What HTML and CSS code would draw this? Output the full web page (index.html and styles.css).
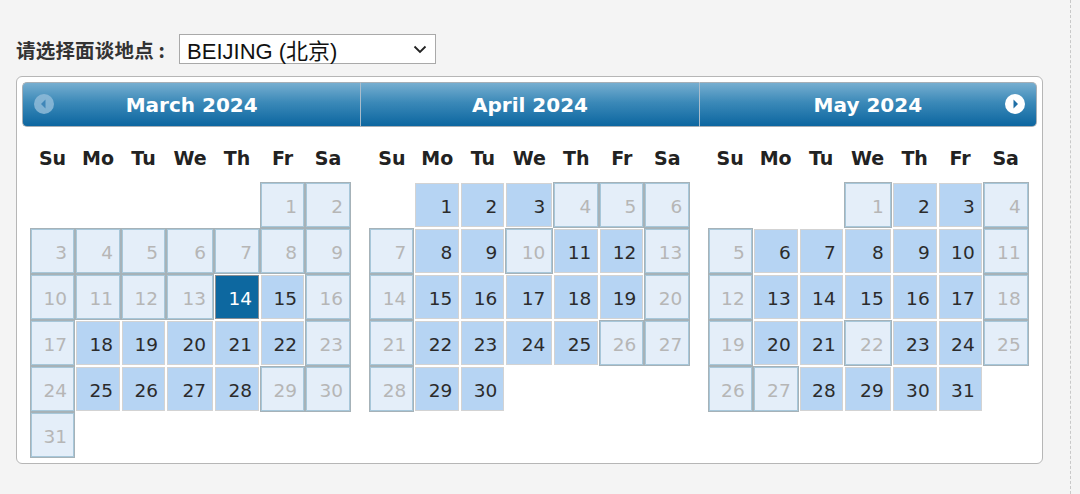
FILE: index.html
```html
<!DOCTYPE html>
<html lang="zh">
<head>
<meta charset="utf-8">
<title>面谈地点</title>
<link rel="stylesheet" href="styles.css">
</head>
<body>
<div class="page">
  <div class="picker-row">
    <label class="label">请选择面谈地点 :</label>
    <div class="select">
      <span class="select-text">BEIJING (北京)</span>
      <svg class="chev" width="14" height="9" viewBox="0 0 14 9"><path d="M1.5 1.5 L7 7 L12.5 1.5" fill="none" stroke="#222" stroke-width="1.8"/></svg>
    </div>
  </div>

  <div class="box">
    <div class="months">
      <div class="month first">
        <div class="mhead">
          <span class="nav prev"><svg width="20" height="20" viewBox="0 0 20 20"><circle cx="10" cy="10" r="10" fill="#8fbbd8" fill-opacity="0.85"/><path d="M11.5 5.5 L7 10 L11.5 14.5 Z" fill="#3f86b8"/></svg></span>
          <span class="mtitle">March 2024</span>
        </div>
        <table class="cal">
          <colgroup><col class="c1"><col class="c2"><col class="c3"><col class="c4"><col class="c5"><col class="c6"><col class="c7"></colgroup>
          <thead><tr><th>Su</th><th>Mo</th><th>Tu</th><th>We</th><th>Th</th><th>Fr</th><th>Sa</th></tr></thead>
          <tbody>
            <tr><td></td><td></td><td></td><td></td><td></td><td class="off"><span>1</span></td><td class="off"><span>2</span></td></tr>
            <tr><td class="off"><span>3</span></td><td class="off"><span>4</span></td><td class="off"><span>5</span></td><td class="off"><span>6</span></td><td class="off"><span>7</span></td><td class="off"><span>8</span></td><td class="off"><span>9</span></td></tr>
            <tr><td class="off"><span>10</span></td><td class="off"><span>11</span></td><td class="off"><span>12</span></td><td class="off"><span>13</span></td><td class="on sel"><span>14</span></td><td class="on"><span>15</span></td><td class="off"><span>16</span></td></tr>
            <tr><td class="off"><span>17</span></td><td class="on"><span>18</span></td><td class="on"><span>19</span></td><td class="on"><span>20</span></td><td class="on"><span>21</span></td><td class="on"><span>22</span></td><td class="off"><span>23</span></td></tr>
            <tr><td class="off"><span>24</span></td><td class="on"><span>25</span></td><td class="on"><span>26</span></td><td class="on"><span>27</span></td><td class="on"><span>28</span></td><td class="off"><span>29</span></td><td class="off"><span>30</span></td></tr>
            <tr><td class="off"><span>31</span></td><td></td><td></td><td></td><td></td><td></td><td></td></tr>
          </tbody>
        </table>
      </div>

      <div class="month">
        <div class="mhead">
          <span class="mtitle">April 2024</span>
        </div>
        <table class="cal">
          <colgroup><col class="c1"><col class="c2"><col class="c3"><col class="c4"><col class="c5"><col class="c6"><col class="c7"></colgroup>
          <thead><tr><th>Su</th><th>Mo</th><th>Tu</th><th>We</th><th>Th</th><th>Fr</th><th>Sa</th></tr></thead>
          <tbody>
            <tr><td></td><td class="on"><span>1</span></td><td class="on"><span>2</span></td><td class="on"><span>3</span></td><td class="off"><span>4</span></td><td class="off"><span>5</span></td><td class="off"><span>6</span></td></tr>
            <tr><td class="off"><span>7</span></td><td class="on"><span>8</span></td><td class="on"><span>9</span></td><td class="off"><span>10</span></td><td class="on"><span>11</span></td><td class="on"><span>12</span></td><td class="off"><span>13</span></td></tr>
            <tr><td class="off"><span>14</span></td><td class="on"><span>15</span></td><td class="on"><span>16</span></td><td class="on"><span>17</span></td><td class="on"><span>18</span></td><td class="on"><span>19</span></td><td class="off"><span>20</span></td></tr>
            <tr><td class="off"><span>21</span></td><td class="on"><span>22</span></td><td class="on"><span>23</span></td><td class="on"><span>24</span></td><td class="on"><span>25</span></td><td class="off"><span>26</span></td><td class="off"><span>27</span></td></tr>
            <tr><td class="off"><span>28</span></td><td class="on"><span>29</span></td><td class="on"><span>30</span></td><td></td><td></td><td></td><td></td></tr>
          </tbody>
        </table>
      </div>

      <div class="month last">
        <div class="mhead">
          <span class="mtitle">May 2024</span>
          <span class="nav next"><svg width="20" height="20" viewBox="0 0 20 20"><circle cx="10" cy="10" r="10" fill="#ffffff"/><path d="M8.5 5.5 L13 10 L8.5 14.5 Z" fill="#1f6fa6"/></svg></span>
        </div>
        <table class="cal">
          <colgroup><col class="c1"><col class="c2"><col class="c3"><col class="c4"><col class="c5"><col class="c6"><col class="c7"></colgroup>
          <thead><tr><th>Su</th><th>Mo</th><th>Tu</th><th>We</th><th>Th</th><th>Fr</th><th>Sa</th></tr></thead>
          <tbody>
            <tr><td></td><td></td><td></td><td class="off"><span>1</span></td><td class="on"><span>2</span></td><td class="on"><span>3</span></td><td class="off"><span>4</span></td></tr>
            <tr><td class="off"><span>5</span></td><td class="on"><span>6</span></td><td class="on"><span>7</span></td><td class="on"><span>8</span></td><td class="on"><span>9</span></td><td class="on"><span>10</span></td><td class="off"><span>11</span></td></tr>
            <tr><td class="off"><span>12</span></td><td class="on"><span>13</span></td><td class="on"><span>14</span></td><td class="on"><span>15</span></td><td class="on"><span>16</span></td><td class="on"><span>17</span></td><td class="off"><span>18</span></td></tr>
            <tr><td class="off"><span>19</span></td><td class="on"><span>20</span></td><td class="on"><span>21</span></td><td class="off"><span>22</span></td><td class="on"><span>23</span></td><td class="on"><span>24</span></td><td class="off"><span>25</span></td></tr>
            <tr><td class="off"><span>26</span></td><td class="off"><span>27</span></td><td class="on"><span>28</span></td><td class="on"><span>29</span></td><td class="on"><span>30</span></td><td class="on"><span>31</span></td><td></td></tr>
          </tbody>
        </table>
      </div>
    </div>
  </div>
</div>
</body>
</html>
```

FILE: styles.css
```css
html, body {
  margin: 0;
  padding: 0;
  background: #f4f4f4;
}

.page {
  width: 1071px;
  height: 494px;
  box-sizing: border-box;
  border-right: 1px dashed #c9c9c9;
  padding: 34px 0 0 16px;
}

.picker-row {
  display: flex;
  align-items: center;
  gap: 14px;
  height: 30px;
}

.label {
  font-family: "Noto Sans CJK SC", "Noto Sans", sans-serif;
  font-weight: bold;
  font-size: 19.5px;
  color: #333;
  letter-spacing: 0.2px;
}

.select {
  width: 257px;
  height: 30px;
  box-sizing: border-box;
  border: 1px solid #a9a9a9;
  background: #fff;
  display: flex;
  align-items: center;
  justify-content: space-between;
  padding: 0 8px 0 7px;
}

.select-text {
  font-family: "Liberation Sans", "Noto Sans CJK SC", sans-serif;
  font-size: 22px;
  color: #111;
}

.box {
  margin-top: 12px;
  width: 1027px;
  height: 388px;
  box-sizing: border-box;
  border: 1px solid #b6b6b6;
  border-radius: 6px;
  background: #fff;
  padding: 5px;
}

.months {
  display: flex;
}

.month {
  flex: 1 1 0;
  display: flex;
  flex-direction: column;
  align-items: flex-start;
}

.mhead {
  position: relative;
  align-self: stretch;
  height: 45px;
  box-sizing: border-box;
  border-top: 1px solid #a6afb6;
  border-bottom: 1px solid #a6afb6;
  border-left: 1px solid #a9bccb;
  background: linear-gradient(to bottom, #76aed0 0%, #3b89b8 45%, #0c66a0 100%);
  display: flex;
  align-items: center;
  justify-content: center;
}

.month.first .mhead {
  border-left: 1px solid #a6afb6;
  border-radius: 5px 0 0 5px;
}

.month.last .mhead {
  border-right: 1px solid #a6afb6;
  border-radius: 0 5px 5px 0;
}

.mtitle {
  font-family: "DejaVu Sans", Verdana, sans-serif;
  font-weight: bold;
  font-size: 20px;
  color: #fff;
  padding-top: 1px;
}

.nav {
  position: absolute;
  top: 11px;
  width: 20px;
  height: 20px;
  display: block;
}
.nav svg { display: block; }
.prev { left: 11px; }
.next { right: 11px; }

.cal {
  border-collapse: separate;
  border-spacing: 0;
  table-layout: fixed;
  width: 321px;
  margin: 4px 0 0 8px;
  font-family: "DejaVu Sans", Verdana, sans-serif;
}

.month:not(.first) .cal { margin-left: 9px; }

col.c1 { width: 45px; }
col.c2 { width: 46px; }
col.c3 { width: 45px; }
col.c4 { width: 48px; }
col.c5 { width: 46px; }
col.c6 { width: 45px; }
col.c7 { width: 46px; }

.cal th {
  height: 51px;
  padding: 3px 0 0 0;
  box-sizing: border-box;
  font-size: 19px;
  font-weight: bold;
  color: #222;
  text-align: center;
  vertical-align: middle;
}

.cal td {
  height: 45.4px;
  padding: 1px;
  box-sizing: border-box;
}

.cal td span {
  display: block;
  height: 100%;
  box-sizing: border-box;
  text-align: right;
  padding: 3px 6px 0 0;
  font-size: 18.5px;
  line-height: 39px;
}

.cal td.off {
  background: #a6b2b8;
}
.cal td.off span {
  border: 1px solid #a7c7da;
  background: #e4eef9;
  color: #b6b6b6;
}

.cal td.on span {
  border: 1px solid #d3d3d3;
  background: #b6d4f3;
  color: #2b2b2b;
}

.cal td.sel span {
  border: 1px solid #8a8f94;
  background: #0d68a0;
  color: #fff;
}
```
